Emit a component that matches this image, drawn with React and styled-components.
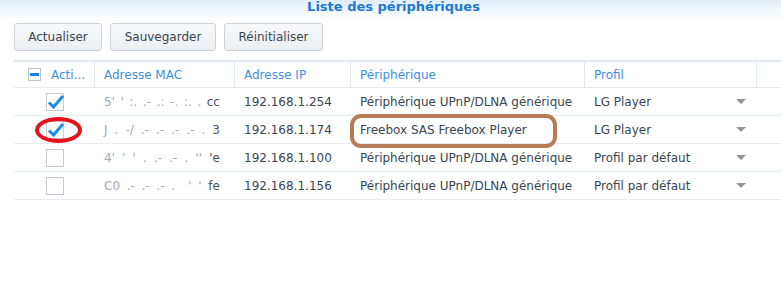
import styled, { createGlobalStyle } from "styled-components";

const GlobalStyle = createGlobalStyle`
  html, body {
    margin: 0;
    padding: 0;
    background: #ffffff;
    font-family: "DejaVu Sans", Verdana, sans-serif;
  }
`;

const Page = styled.div`
  width: 781px;
  height: 297px;
  overflow: hidden;
  background: #ffffff;
`;

const TitleBar = styled.div`
  height: 20px;
  background: linear-gradient(to bottom, #e1edf9 0%, #f3f8fd 60%, #ffffff 100%);
  display: flex;
  justify-content: center;
  padding-left: 6px;
`;

const Title = styled.div`
  font-size: 13px;
  font-weight: bold;
  color: #1a7ad6;
  line-height: 14px;
`;

const Toolbar = styled.div`
  display: flex;
  gap: 8px;
  padding: 3px 0 0 14px;
`;

const Button = styled.button`
  height: 28px;
  width: ${(p) => p.w}px;
  box-sizing: border-box;
  border: 1px solid #cbd3db;
  border-radius: 3px;
  background: linear-gradient(to bottom, #f6f8fa, #eceff2);
  font-family: "DejaVu Sans", Verdana, sans-serif;
  font-size: 12px;
  color: #3c4650;
  padding: 0;
`;

const TableWrap = styled.div`
  position: relative;
  margin: 9px 0 0 14px;
`;

const HeaderRow = styled.div`
  display: grid;
  grid-template-columns: 81px 140px 116px 234px 172px 1fr;
  height: 28px;
  box-sizing: border-box;
  border-top: 2px solid #e2eaf1;
  border-bottom: 1px solid #e4eaef;
`;

const HeaderCell = styled.div`
  display: flex;
  align-items: center;
  gap: 10px;
  padding-left: ${(p) => p.pl ?? 9}px;
  font-size: 12px;
  color: #3f8fe0;
  border-right: ${(p) => (p.last ? "none" : "1px solid #e2e8ee")};
  white-space: nowrap;
  overflow: hidden;
`;

const Row = styled.div`
  display: grid;
  grid-template-columns: 81px 140px 116px 234px 172px 1fr;
  height: 28px;
  box-sizing: border-box;
  border-bottom: 1px solid #e9eef2;
`;

const Cell = styled.div`
  display: flex;
  align-items: center;
  justify-content: ${(p) => (p.center ? "center" : "flex-start")};
  padding-left: ${(p) => (p.center ? 0 : 9)}px;
  font-size: 12px;
  color: #3a4550;
  white-space: nowrap;
  overflow: hidden;
`;

const ProfileCell = styled(Cell)`
  justify-content: space-between;
  padding-right: 11px;
`;

const Mac = styled.span`
  width: 116px;
  display: flex;
  justify-content: space-between;
  color: #a3aab1;
  span {
    color: ${(p) => p.c};
  }
  b {
    font-weight: normal;
    color: #4a545e;
  }
`;

const Box = styled.div`
  width: 18px;
  height: 18px;
  box-sizing: border-box;
  border: 1px solid #c3ccd5;
  background: #ffffff;
  position: relative;
`;

const HeadBox = styled.div`
  width: 13px;
  height: 13px;
  box-sizing: border-box;
  border: 1px solid #b9c4ce;
  background: #fff;
  display: flex;
  align-items: center;
  justify-content: center;
  &::after {
    content: "";
    width: 9px;
    height: 3px;
    background: #1a7fe0;
  }
`;

const Arrow = styled.span`
  width: 0;
  height: 0;
  border-left: 5px solid transparent;
  border-right: 5px solid transparent;
  border-top: 5px solid #8d969e;
`;

const Check = styled.svg`
  position: absolute;
  left: 0px;
  top: -1px;
`;

const RedEllipse = styled.div`
  position: absolute;
  left: 21px;
  top: 57px;
  width: 47px;
  height: 26px;
  box-sizing: border-box;
  border: 4px solid #e5101a;
  border-radius: 50%;
`;

const BrownBox = styled.div`
  position: absolute;
  left: 336px;
  top: 54px;
  width: 207px;
  height: 34px;
  box-sizing: border-box;
  border: 4px solid #b77b58;
  border-radius: 11px;
`;

const rows = [
  { on: true, mac: ["5'", "'", ":.", ".-", ".:", "-.", ":.", ".", "cc"], ip: "192.168.1.254", dev: "Périphérique UPnP/DLNA générique", prof: "LG Player" },
  { on: true, mac: ["J", ".", "-/", ".-", ".-", ".-", ".-", ".", "3"], ip: "192.168.1.174", dev: "Freebox SAS Freebox Player", prof: "LG Player" },
  { on: false, mac: ["4'", "'", "'", ".", ".-", ".-", ".", "''", "'e"], ip: "192.168.1.100", dev: "Périphérique UPnP/DLNA générique", prof: "Profil par défaut" },
  { on: false, mac: ["C0", ".-", ".-", ".-", ".", " ", "'", "'", "fe"], ip: "192.168.1.156", dev: "Périphérique UPnP/DLNA générique", prof: "Profil par défaut" },
];

function CheckBox({ on }) {
  return (
    <Box>
      {on && (
        <Check width="18" height="18" viewBox="0 0 18 18">
          <path d="M2 9.5 L6.5 14 L16 3" fill="none" stroke="#1a8be8" strokeWidth="3" />
        </Check>
      )}
    </Box>
  );
}

export default function App() {
  return (
    <Page>
      <GlobalStyle />
      <TitleBar>
        <Title>Liste des périphériques</Title>
      </TitleBar>
      <Toolbar>
        <Button w={88}>Actualiser</Button>
        <Button w={106}>Sauvegarder</Button>
        <Button w={99}>Réinitialiser</Button>
      </Toolbar>
      <TableWrap>
        <HeaderRow>
          <HeaderCell pl={14}>
            <HeadBox />
            Acti...
          </HeaderCell>
          <HeaderCell>Adresse MAC</HeaderCell>
          <HeaderCell>Adresse IP</HeaderCell>
          <HeaderCell>Périphérique</HeaderCell>
          <HeaderCell>Profil</HeaderCell>
          <HeaderCell last />
        </HeaderRow>
        {rows.map((r, i) => (
          <Row key={i}>
            <Cell center>
              <CheckBox on={r.on} />
            </Cell>
            <Cell>
              <Mac>
                {r.mac.slice(0, -1).map((m, j) => (
                  <span key={j}>{m}</span>
                ))}
                <b>{r.mac[r.mac.length - 1]}</b>
              </Mac>
            </Cell>
            <Cell>{r.ip}</Cell>
            <Cell>{r.dev}</Cell>
            <ProfileCell>
              {r.prof}
              <Arrow />
            </ProfileCell>
            <Cell />
          </Row>
        ))}
        <RedEllipse />
        <BrownBox />
      </TableWrap>
    </Page>
  );
}
